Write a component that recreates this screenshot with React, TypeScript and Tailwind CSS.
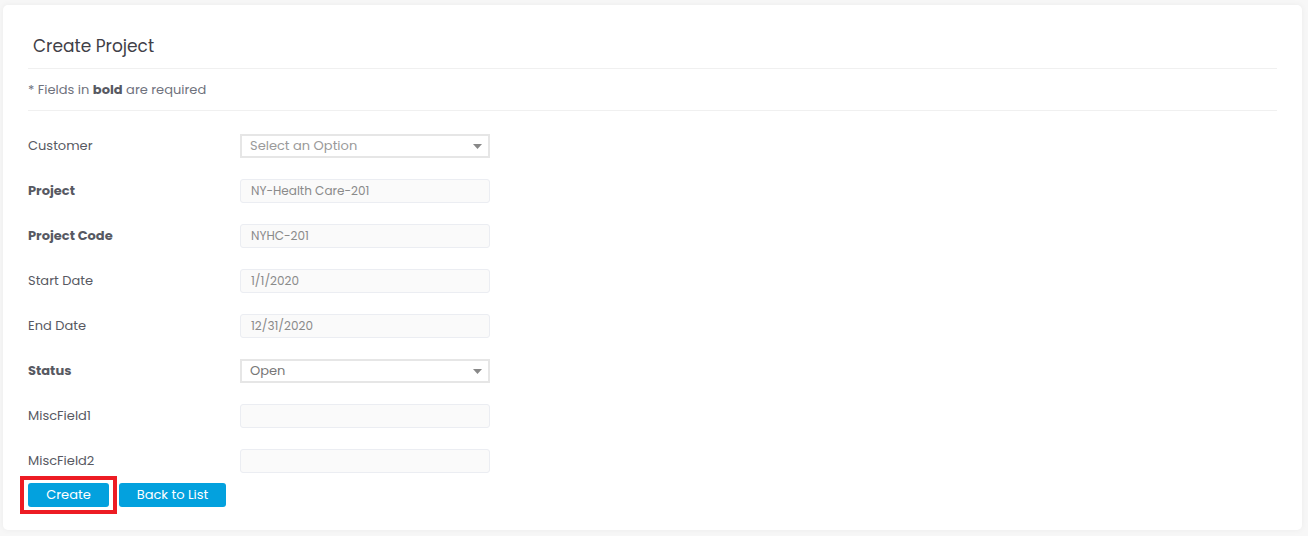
import React from "react";

const font = { fontFamily: "Poppins, 'Open Sans', 'Noto Sans', sans-serif" };

function Label({ text, bold }: { text: string; bold?: boolean }) {
  return (
    <div className={`w-[212px] shrink-0 text-[13px] text-[#575962] ${bold ? "font-bold" : "font-normal"}`}>{text}</div>
  );
}

function TextInput({ value }: { value: string }) {
  return (
    <div className="h-[24px] w-[250px] rounded-[3px] border border-[#ebedf2] bg-[#fafafa] px-[10px] text-[12px] leading-[22px] text-[#8a8a8a]">
      {value}
    </div>
  );
}

function Select({ value, placeholder }: { value: string; placeholder?: boolean }) {
  return (
    <div className="flex h-[24px] w-[250px] items-center justify-between border-2 border-[#e6e6e6] bg-white pl-[8px] pr-[6px]">
      <span className={`mt-[1px] text-[13px] ${placeholder ? "text-[#9a9a9a]" : "text-[#777]"}`}>{value}</span>
      <svg width="9" height="5" viewBox="0 0 9 5" className="mt-[1px]">
        <path d="M0 0 L9 0 L4.5 5 Z" fill="#888" />
      </svg>
    </div>
  );
}

function Row({ children }: { children: React.ReactNode }) {
  return <div className="flex h-[45px] items-center">{children}</div>;
}

export default function App() {
  return (
    <div className="h-[536px] w-[1308px] bg-[#f7f7f7] pl-[3px] pr-[6px] pt-[5px]" style={font}>
      <div className="h-[525px] rounded-[5px] bg-white px-[25px] shadow-[0_0_6px_rgba(0,0,0,0.05)]">
        <div className="border-b border-[#f0f0f0] pb-[12px] pt-[31px] pl-[5px] text-[17px] leading-[20px] text-[#3f4047]">
          Create Project
        </div>
        <div className="border-b border-[#f0f0f0] pb-[10px] pt-[11px] text-[13px] leading-[20px] text-[#6f727d]">
          * Fields in <span className="font-bold text-[#575962]">bold</span> are required
        </div>
        <div className="pt-[12px]">
          <Row>
            <Label text="Customer" />
            <Select value="Select an Option" placeholder />
          </Row>
          <Row>
            <Label text="Project" bold />
            <TextInput value="NY-Health Care-201" />
          </Row>
          <Row>
            <Label text="Project Code" bold />
            <TextInput value="NYHC-201" />
          </Row>
          <Row>
            <Label text="Start Date" />
            <TextInput value="1/1/2020" />
          </Row>
          <Row>
            <Label text="End Date" />
            <TextInput value="12/31/2020" />
          </Row>
          <Row>
            <Label text="Status" bold />
            <Select value="Open" />
          </Row>
          <Row>
            <Label text="MiscField1" />
            <TextInput value="" />
          </Row>
          <Row>
            <Label text="MiscField2" />
            <TextInput value="" />
          </Row>
          <div className="flex items-start gap-[10px]">
            <div className="relative flex">
              <button className="h-[24px] w-[81px] rounded-[3px] bg-[#03a1de] text-[13px] leading-[22px] text-white">Create</button>
              <span className="pointer-events-none absolute -bottom-[7px] -left-[8px] -right-[8px] -top-[7px] border-4 border-[#ed1c24]" />
            </div>
            <button className="h-[24px] w-[107px] rounded-[3px] bg-[#03a1de] text-[13px] leading-[22px] text-white">Back to List</button>
          </div>
        </div>
      </div>
    </div>
  );
}
